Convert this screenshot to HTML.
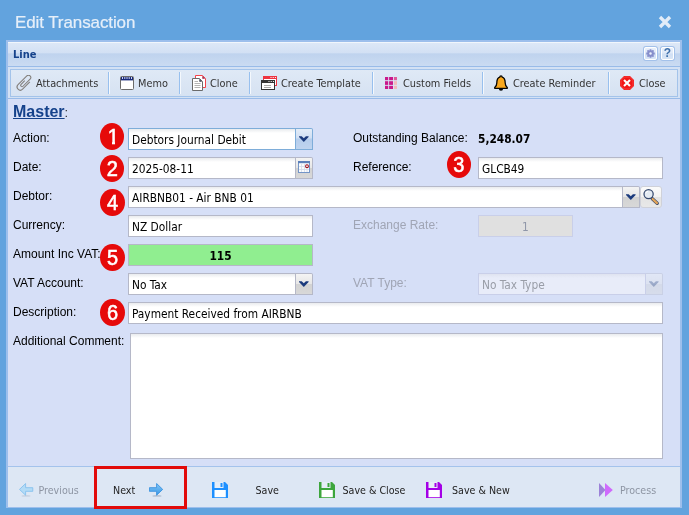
<!DOCTYPE html>
<html><head><meta charset="utf-8"><title>Edit Transaction</title>
<style>
*{box-sizing:border-box;margin:0;padding:0}
html,body{width:689px;height:515px;overflow:hidden}
body{background:#62a3de;font-family:"Liberation Sans",sans-serif;font-size:12px;color:#000;position:relative}
.abs,svg{position:absolute}
.title{left:15px;top:11px;font-size:17px;color:#e6eff9;line-height:24px;font-family:"Liberation Sans",sans-serif;letter-spacing:-0.1px;-webkit-text-stroke:.2px #e6eff9}
.panel{left:6px;top:40px;width:676px;height:468px;background:#d6dff7;border:2px solid #9dbfec;border-bottom-width:1px}
.hdr{left:8px;top:42px;width:672px;height:25px;background:linear-gradient(#dde8f7 0,#d2e0f4 43%,#bfd3ee 47%,#cadbf2 100%);border-top:1px solid #f1f6fc;border-bottom:1px solid #99bbe8}
.hdr span{position:absolute;left:5px;top:5px;font:bold 11px "DejaVu Sans Condensed","Liberation Sans",sans-serif;color:#15428b;line-height:14px}
.tb{left:8px;top:67px;width:672px;height:32px;background:#d3e1f4;border-bottom:1px solid #99bbe8}
.tbi{left:10px;top:69px;width:668px;height:28px;background:linear-gradient(#dfe9f6,#d6e2f2);border:1px solid #a3c3ea}
.tbt{position:absolute;top:76.7px;font:10.85px "DejaVu Sans Condensed","Liberation Sans",sans-serif;color:#333;line-height:14px;white-space:nowrap}
.sep{position:absolute;top:72px;width:2px;height:22px;border-left:1px solid #98c0ee;border-right:1px solid #f4f8fd}
.master{left:13px;top:102px;font:bold 16px "Liberation Sans",sans-serif;color:#15428b;line-height:20px;white-space:nowrap}
.master u{text-decoration-thickness:1px;text-underline-offset:1px}
.master span{font-weight:normal;font-size:13px;color:#333}
.lbl{position:absolute;font:12px "Liberation Sans",sans-serif;color:#000;line-height:14px;white-space:nowrap}
.lbl.dis{color:#a0a5b5}
.inp{position:absolute;height:22px;background:#fff linear-gradient(#e9ebee 0,#fff 4px);border:1px solid #b5b8c8;font:11.8px "DejaVu Sans Condensed","Liberation Sans",sans-serif;line-height:22px;padding-left:3px;white-space:nowrap;color:#000}
.inp.foc{border-color:#7eadd9}
.inp.dis{background:#e8ecf9 linear-gradient(#dfe3f0 0,#e8ecf9 4px);color:#999da7;border-color:#c9cfe9}
.trg{position:absolute;width:17px;height:22px;border-radius:0 2px 0 0;border:1px solid #b5b8c8;border-left:none;background:linear-gradient(#f4f4f4 0,#e6e6e6 50%,#d2d2d2 51%,#d8d8d8 100%)}
.trg.foc{border-color:#7eadd9;background:linear-gradient(#e3ecf8 0,#d0dff3 45%,#b5cdec 50%,#bfd4ef 100%)}
.num{position:absolute;width:24.3px;height:27px;border-radius:50%;background:#e60a0a;color:#fff;font:20px "Liberation Sans",sans-serif;line-height:29.4px;overflow:hidden;text-align:center}
.num b{display:block;font-weight:normal;transform:scaleY(1.06);-webkit-text-stroke:.55px #fff}
.num i{position:absolute;top:18.6px;height:4px;background:#e60a0a}
.foot{left:8px;top:466px;width:672px;height:41px;background:#dde7f4;border-top:1px solid #a4c3ec}
.ft{position:absolute;top:483px;font:10.6px "DejaVu Sans Condensed","Liberation Sans",sans-serif;color:#222;line-height:14px;white-space:nowrap}
.ft.dis{color:#8d95a3}
.tool{position:absolute;top:47px;width:13px;height:13px;border:1px solid #fff;border-radius:2px;background:linear-gradient(#e9f0fb 0,#dfe9f8 48%,#d0dff4 52%,#d8e5f6 100%);box-shadow:0 0 0 1px #a3c1ea}
#wrap{position:absolute;left:0;top:0;width:689px;height:515px;will-change:transform}
</style></head><body><div id="wrap">
<div class="abs title">Edit Transaction</div>
<svg style="left:658px;top:15px" width="14" height="14" viewBox="0 0 14 14"><path d="M2 2 L12 12 M12 2 L2 12" stroke="#e2ecf8" stroke-width="3.3"/></svg>
<div class="abs panel"></div>
<div class="abs hdr"><span>Line</span></div>
<div class="tool" style="left:644px"></div>
<div class="tool" style="left:661px"></div>
<div class="abs tb"></div>
<div class="abs tbi"></div>

<div class="tbt" style="left:36px">Attachments</div>
<div class="sep" style="left:108px"></div>
<div class="tbt" style="left:138px">Memo</div>
<div class="sep" style="left:179px"></div>
<div class="tbt" style="left:210px">Clone</div>
<div class="sep" style="left:249px"></div>
<div class="tbt" style="left:281px">Create Template</div>
<div class="sep" style="left:372px"></div>
<div class="tbt" style="left:403px">Custom Fields</div>
<div class="sep" style="left:482px"></div>
<div class="tbt" style="left:513px">Create Reminder</div>
<div class="sep" style="left:608px"></div>
<div class="tbt" style="left:639px">Close</div>

<div class="abs master"><u>Master</u><span>:</span></div>

<div class="lbl" style="left:13px;top:131px">Action:</div>
<div class="lbl" style="left:13px;top:160px">Date:</div>
<div class="lbl" style="left:13px;top:189px">Debtor:</div>
<div class="lbl" style="left:13px;top:218px">Currency:</div>
<div class="lbl" style="left:13px;top:247px">Amount Inc VAT:</div>
<div class="lbl" style="left:13px;top:276px">VAT Account:</div>
<div class="lbl" style="left:13px;top:305px">Description:</div>
<div class="lbl" style="left:13px;top:334px">Additional Comment:</div>

<div class="lbl" style="left:353px;top:131px">Outstanding Balance:</div>
<div class="lbl" style="left:478px;top:132px;font:bold 11.8px 'DejaVu Sans Condensed','Liberation Sans',sans-serif">5,248.07</div>
<div class="lbl" style="left:353px;top:160px">Reference:</div>
<div class="lbl dis" style="left:353px;top:218px">Exchange Rate:</div>
<div class="lbl dis" style="left:353px;top:276px">VAT Type:</div>

<div class="inp foc" style="left:128px;top:128px;width:168px">Debtors Journal Debit</div><div class="trg foc" style="left:296px;top:128px"></div>
<div class="inp" style="left:128px;top:157px;width:168px">2025-08-11</div><div class="trg" style="left:296px;top:157px"></div>
<div class="inp" style="left:128px;top:186px;width:495px">AIRBNB01 - Air BNB 01</div><div class="trg" style="left:623px;top:186px"></div>
<div class="trg" style="left:640px;top:186px;width:22.4px;border:1px solid #cfd1d9;border-radius:3px;background:linear-gradient(#fbfbfb 0,#f3f3f3 48%,#e4e4e4 52%,#e8e8e8 100%)"></div>
<div class="inp" style="left:128px;top:215px;width:185px">NZ Dollar</div>
<div class="inp" style="left:128px;top:244px;width:185px;background:#90ee90;border-color:#b5b8c8;font-weight:bold;text-align:center;line-height:22px;padding-left:0">115</div>
<div class="inp" style="left:128px;top:273px;width:168px">No Tax</div><div class="trg" style="left:296px;top:273px"></div>
<div class="inp" style="left:128px;top:302px;width:535px">Payment Received from AIRBNB</div>
<div class="inp" style="left:130px;top:333px;width:533px;height:126px"></div>

<div class="inp" style="left:478px;top:157px;width:185px">GLCB49</div>
<div class="inp dis" style="left:478px;top:215px;width:95px;text-align:center;padding-left:0;background:#e0e0e0;color:#8f96a8">1</div>
<div class="inp dis" style="left:478px;top:273px;width:168px">No Tax Type</div><div class="trg" style="left:646px;top:273px;opacity:.38"></div>

<div class="num" style="left:100.2px;top:122.8px"><b style="padding-left:2px">1</b><i style="left:6px;width:5.8px"></i><i style="left:14.8px;width:5px"></i></div>
<div class="num" style="left:100.2px;top:155px"><b>2</b></div>
<div class="num" style="left:446.7px;top:151.3px"><b>3</b></div>
<div class="num" style="left:100.3px;top:188.8px"><b>4</b></div>
<div class="num" style="left:100.3px;top:244px"><b>5</b></div>
<div class="num" style="left:100.3px;top:298.8px"><b>6</b></div>

<div class="abs foot"></div>
<!-- toolbar icons -->
<svg style="left:16px;top:75px" width="16" height="16" viewBox="0 0 16 16"><g transform="translate(8 8) rotate(-45)" fill="none" stroke="#827e7a" stroke-width="1.05" stroke-linecap="round"><path d="M4.5 3.4 L-5.4 3.4 A3.2 3.2 0 0 1 -5.4 -3 L7 -3 A2.3 2.3 0 0 1 7 1.6 L-3 1.6 A1.35 1.35 0 0 1 -3 -1.1 L1.8 -1.1"/></g></svg>
<svg style="left:120px;top:76px" width="14" height="14" viewBox="0 0 14 14"><rect x=".5" y=".5" width="13" height="13" rx="1" fill="#fff" stroke="#6b6b6b"/><rect x="1" y="1" width="12" height="3.4" fill="#17297c"/><path d="M2.5 1 V3 M4.8 1 V3 M7 1 V3 M9.2 1 V3 M11.5 1 V3" stroke="#e8ecf8" stroke-width=".9"/></svg>
<svg style="left:192px;top:75px" width="15" height="16" viewBox="0 0 15 16"><path d="M3.5 .5 H10.5 L13.5 3.5 V12.5 H3.5 Z" fill="#fff" stroke="#f4434a"/><path d="M10.3 .8 V3.7 H13.2 Z" fill="#9b2346"/><path d="M.5 3.5 H7.5 L10.5 6.5 V15.5 H.5 Z" fill="#fff" stroke="#6a6a6a"/><path d="M7.3 3.8 V6.7 H10.2 Z" fill="#3a4050"/><path d="M2.5 6.5 H6 M2.5 8.5 H8.5 M2.5 10.5 H8.5 M2.5 12.5 H8.5" stroke="#b4b4b4"/></svg>
<svg style="left:261px;top:76px" width="16" height="14" viewBox="0 0 16 14"><rect x="2.5" y=".5" width="13" height="9" fill="#fff" stroke="#ee3340"/><rect x="2" y="0" width="14" height="3" fill="#ee3340"/><path d="M9.5 1.5 h1 M11.7 1.5 h1 M13.9 1.5 h1" stroke="#fff" stroke-width="1.2"/><rect x=".5" y="4.5" width="13" height="9" fill="#fff" stroke="#333"/><rect x="0" y="4" width="14" height="3" fill="#333"/><path d="M7.5 5.5 h1 M9.7 5.5 h1 M11.9 5.5 h1" stroke="#fff" stroke-width="1.2"/><path d="M3 9.5 H10 M3 11.5 H10" stroke="#aaa"/></svg>
<svg style="left:385px;top:77px" width="12" height="12" viewBox="0 0 12 12"><g fill="#c9198c"><rect x="0" y="0" width="3.2" height="3.2"/><rect x="4.1" y="0" width="3.9" height="3.2"/><rect x="0" y="4.2" width="3.2" height="3.7"/><rect x="4.1" y="4.2" width="3.9" height="3.7"/><rect x="0" y="8.8" width="3.2" height="3.2"/><rect x="4.1" y="8.8" width="3.9" height="3.2"/></g><rect x="8.9" y="0" width="3.1" height="3.2" fill="#df5a9a"/><rect x="8.9" y="4.2" width="3.1" height="3.7" fill="#f3b9bd"/><rect x="8.9" y="8.8" width="3.1" height="3.2" fill="#f3b9bd"/></svg>
<svg style="left:494px;top:75px" width="14" height="16" viewBox="0 0 14 16"><path d="M7 .9 C7.7 .9 8.1 1.4 8.1 2.1 C10.8 2.8 11.2 5.2 11.2 8 C11.2 10.2 11.9 11.4 13.3 12.5 V13.3 H.7 V12.5 C2.1 11.4 2.8 10.2 2.8 8 C2.8 5.2 3.2 2.8 5.9 2.1 C5.9 1.4 6.3 .9 7 .9 Z" fill="#f9a81d" stroke="#050505" stroke-width="1.3" stroke-linejoin="round"/><path d="M4.8 13.6 A2.2 2.2 0 0 0 9.2 13.6 Z" fill="#050505"/></svg>
<svg style="left:620px;top:76px" width="14" height="14" viewBox="0 0 14 14"><polygon points="4,0 10,0 14,4 14,10 10,14 4,14 0,10 0,4" fill="#f21616"/><polygon points="4.4,1 9.6,1 13,4.4 13,9.6 9.6,13 4.4,13 1,9.6 1,4.4" fill="none" stroke="#f75a5a" stroke-width=".6"/><path d="M4 4 L10 10 M10 4 L4 10" stroke="#fff" stroke-width="2.1"/></svg>
<!-- header tools -->
<svg style="left:646px;top:49px" width="9" height="9" viewBox="0 0 11 11"><g fill="#868ecb"><circle cx="5.5" cy="5.5" r="3.9"/><g stroke="#868ecb" stroke-width="2.2"><path d="M5.5 .3 V10.7 M.3 5.5 H10.7 M1.8 1.8 L9.2 9.2 M9.2 1.8 L1.8 9.2"/></g></g><circle cx="5.5" cy="5.5" r="1.5" fill="#eef2fb"/></svg>
<div class="abs" style="left:660px;top:46px;width:15px;height:15px;text-align:center;font:bold 12px 'Liberation Sans',sans-serif;line-height:15px;color:#3f70ab">?</div>
<!-- triggers -->
<svg style="left:299px;top:135.7px" width="10" height="6" viewBox="0 0 10 6"><polygon points="0,.3 2.7,.3 4.8,2.3 6.9,.3 9.6,.3 9.6,1 4.8,5.9 0,1" fill="#1b3a7c"/></svg>
<svg style="left:625.8px;top:193.5px" width="10" height="6" viewBox="0 0 10 6"><polygon points="0,.3 2.7,.3 4.8,2.3 6.9,.3 9.6,.3 9.6,1 4.8,5.9 0,1" fill="#1b3a7c"/></svg>
<svg style="left:299px;top:280.8px" width="10" height="6" viewBox="0 0 10 6"><polygon points="0,.3 2.7,.3 4.8,2.3 6.9,.3 9.6,.3 9.6,1 4.8,5.9 0,1" fill="#1b3a7c"/></svg>
<svg style="left:649px;top:280.8px" width="10" height="6" viewBox="0 0 10 6" opacity=".32"><polygon points="0,.3 2.7,.3 4.8,2.3 6.9,.3 9.6,.3 9.6,1 4.8,5.9 0,1" fill="#1b3a7c"/></svg>
<svg style="left:298px;top:161px" width="12" height="12" viewBox="0 0 12 12"><rect x=".5" y=".5" width="11" height="11" fill="#fbfcfe" stroke="#7394c6"/><rect x="0" y="0" width="12" height="2.2" fill="#5b80bb"/><path d="M3.5 3 V11 M6.5 3 V11 M9 3 V11 M1 5.5 H11 M1 8.5 H11" stroke="#d3dbe9" stroke-width=".8"/><circle cx="9" cy="5.2" r="1.4" fill="#fff" stroke="#a0111f" stroke-width="1.1"/></svg>
<svg style="left:642px;top:188px" width="20" height="19" viewBox="0 0 20 19"><path d="M10.3 10.7 L15.2 15.3" stroke="#3b4a68" stroke-width="3.4" stroke-linecap="round"/><path d="M10.6 11 L15 15.1" stroke="#e3a457" stroke-width="2.2" stroke-linecap="round"/><circle cx="6.6" cy="6.1" r="4.6" fill="#e4ebf3" stroke="#35496f" stroke-width="1.25"/><path d="M3.8 5.2 A3 3 0 0 1 6 3.2" stroke="#fff" stroke-width="1" fill="none"/></svg>
<!-- footer icons -->
<svg style="left:19px;top:483px" width="15" height="14" viewBox="0 0 15 14"><ellipse cx="7" cy="12.9" rx="4.6" ry=".7" fill="#b4bfd0" opacity=".7"/><path d="M13.8 4.7 H6.6 V.5 L.5 6.4 L6.6 12.2 V8.3 H13.8 Z" fill="#b3dbf6" stroke="#86c1ee" stroke-width=".9" stroke-linejoin="round"/></svg>
<svg style="left:149px;top:483px" width="15" height="14" viewBox="0 0 15 14"><ellipse cx="8" cy="12.9" rx="4.6" ry=".7" fill="#94a3b8" opacity=".8"/><defs><linearGradient id="ga" x1="0" y1="0" x2="0" y2="1"><stop offset="0" stop-color="#86caf8"/><stop offset="1" stop-color="#3796e6"/></linearGradient></defs><path d="M.4 4.7 H7.6 V.5 L13.7 6.4 L7.6 12.2 V8.3 H.4 Z" fill="url(#ga)" stroke="#3a92df" stroke-width=".9" stroke-linejoin="round"/></svg>
<svg style="left:212px;top:482px" width="16" height="16" viewBox="0 0 16 16"><path d="M0 0 H13 L16 3 V16 H0 Z" fill="#1e90ff"/><rect x="2.5" y="0" width="9" height="6" fill="#e6eef8"/><rect x="8.5" y="1" width="2" height="4" fill="#1e90ff"/><rect x="2.5" y="8" width="11.3" height="7.2" fill="#fff"/></svg>
<svg style="left:319px;top:482px" width="16" height="16" viewBox="0 0 16 16"><path d="M0 0 H13 L16 3 V16 H0 Z" fill="#3da63d"/><rect x="2.5" y="0" width="9" height="6" fill="#e6eef8"/><rect x="8.5" y="1" width="2" height="4" fill="#3da63d"/><rect x="2.5" y="8" width="11.3" height="7.2" fill="#fff"/></svg>
<svg style="left:426px;top:482px" width="16" height="16" viewBox="0 0 16 16"><path d="M0 0 H13 L16 3 V16 H0 Z" fill="#a400e6"/><rect x="2.5" y="0" width="9" height="6" fill="#e6eef8"/><rect x="8.5" y="1" width="2" height="4" fill="#a400e6"/><rect x="2.5" y="8" width="11.3" height="7.2" fill="#fff"/></svg>
<svg style="left:599px;top:483px" width="14" height="14" viewBox="0 0 14 14"><path d="M0 0 L6.5 7 L0 14 Z" fill="#9c82d8"/><path d="M6 0 L13.8 7 L6 14 Z" fill="#cf6afc"/></svg>

<div class="ft dis" style="left:38.5px">Previous</div>
<div class="ft" style="left:113px">Next</div>
<div class="ft" style="left:255.5px">Save</div>
<div class="ft" style="left:342.5px">Save &amp; Close</div>
<div class="ft" style="left:452px">Save &amp; New</div>
<div class="ft dis" style="left:620px">Process</div>
<div class="abs" style="left:94px;top:466px;width:93px;height:43px;border:3px solid #e20a0a"></div>
</div></body></html>
